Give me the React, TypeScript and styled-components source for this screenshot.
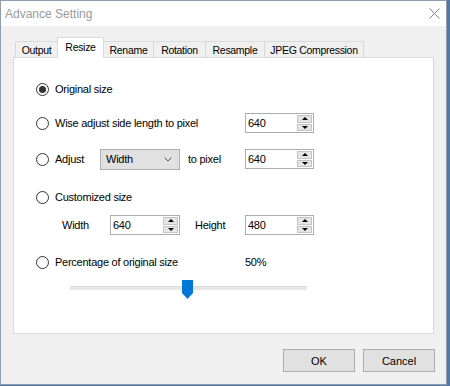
import React from 'react';
import styled, { createGlobalStyle, css } from 'styled-components';

const GlobalStyle = createGlobalStyle`
    html, body {
        margin:0;
        padding:0;
        background:#5577a8;
    }
    body{
        font-family:"Liberation Sans", Arial, sans-serif;
        font-size:11px;
    }
`;

const Window = styled.div`
    box-sizing:border-box;
    width:447px;
    height:385px;
    border:1px solid #8f9cad;
    background:#f0f0f0;
    display:flex;
    flex-direction:column;
`;

const TitleBar = styled.div`
    height:25px;
    background:#fff;
    display:flex;
    align-items:center;
    justify-content:space-between;
    padding-left:4px;
    padding-right:6px;
    & >span{
        font-size:12px;
        color:#999;
    }
`;

const Body = styled.div`
    flex:1;
    padding:11px 12px 12px 12px;
    display:flex;
    flex-direction:column;
`;

const TabStrip = styled.div`
    display:flex;
    align-items:flex-end;
    height:20px;
    padding-left:2px;
    position:relative;
    z-index:1;
`;

const Tab = styled.div<{ $w: number; $active?: boolean }>`
    box-sizing:border-box;
    width:${p => p.$w + 1}px;
    margin-right:-1px;
    height:16px;
    border:1px solid #d9d9d9;
    border-bottom:none;
    background:#f0f0f0;
    display:flex;
    align-items:center;
    justify-content:center;
    font-size:10.5px;
    letter-spacing:-0.3px;
    color:#000;
    ${p => p.$active && css`
        height:21px;
        margin-bottom:-1px;
        background:#fff;
        position:relative;
        z-index:2;
        padding-bottom:2px;
    `}
`;

const Panel = styled.div`
    box-sizing:border-box;
    height:277px;
    background:#fff;
    border:1px solid #d9d9d9;
    padding:20px 0 0 22px;
    display:flex;
    flex-direction:column;
`;

const Row = styled.div<{ $top?: number }>`
    height:22px;
    margin-top:${p => p.$top ?? 0}px;
    display:grid;
    grid-template-columns:209px 69px;
    align-items:center;
`;

const SizeRow = styled.div<{ $top?: number }>`
    height:22px;
    margin-top:${p => p.$top ?? 0}px;
    padding-left:26px;
    display:grid;
    grid-template-columns:48px 85px 50px 69px;
    align-items:center;
`;

const Inline = styled.div`
    display:flex;
    align-items:center;
`;

const Choice = styled.label<{ $w?: number }>`
    display:flex;
    align-items:center;
    width:${p => (p.$w ? `${p.$w}px` : 'auto')};
    letter-spacing:-0.25px;
    white-space:nowrap;
`;

const RadioCircle = styled.span<{ $checked?: boolean }>`
    box-sizing:border-box;
    width:13px;
    height:13px;
    border:1px solid #333;
    border-radius:50%;
    background:#fff;
    margin-right:6px;
    display:flex;
    align-items:center;
    justify-content:center;
    flex-shrink:0;
    &::after{
        content:'';
        width:7px;
        height:7px;
        border-radius:50%;
        background:${p => (p.$checked ? '#333' : 'transparent')};
    }
`;

const Text = styled.span<{ $ml?: number }>`
    margin-left:${p => p.$ml ?? 0}px;
    letter-spacing:-0.25px;
    white-space:nowrap;
`;

const SpinBox = styled.div<{ $w: number }>`
    box-sizing:border-box;
    width:${p => p.$w}px;
    height:20px;
    border:1px solid #acacac;
    background:#fff;
    display:flex;
    & >span{
        flex:1;
        padding-left:2px;
        line-height:18px;
        letter-spacing:-0.25px;
    }
`;

const SpinButtons = styled.div`
    width:15px;
    display:flex;
    flex-direction:column;
    padding:1px 1px 1px 0;
    gap:1px;
`;

const SpinButton = styled.div<{ $down?: boolean }>`
    flex:1;
    background:#e5e5e5;
    border:1px solid #c4c4c4;
    display:flex;
    align-items:center;
    justify-content:center;
    &::after{
        content:'';
        width:0;
        height:0;
        border-left:3px solid transparent;
        border-right:3px solid transparent;
        ${p => (p.$down ? 'border-top:3px solid #000;' : 'border-bottom:3px solid #000;')}
    }
`;

const Dropdown = styled.div`
    box-sizing:border-box;
    width:80px;
    height:21px;
    background:#e1e1e1;
    border:1px solid #adadad;
    display:flex;
    align-items:center;
    justify-content:space-between;
    padding:0 7px 0 5px;
    letter-spacing:-0.25px;
`;

const SliderBox = styled.div`
    position:relative;
    width:237px;
    height:20px;
    margin-top:7px;
    margin-left:34px;
`;

const Track = styled.div`
    margin-top:6px;
    height:3px;
    background:#e7e7e7;
    border-top:1px solid #dcdcdc;
`;

const Thumb = styled.svg`
    position:absolute;
    top:0;
`;

const ButtonRow = styled.div`
    display:flex;
    justify-content:flex-end;
    gap:8px;
    margin-top:15px;
    margin-right:-1px;
`;

const DialogButton = styled.button`
    box-sizing:border-box;
    width:72px;
    height:23px;
    background:#e1e1e1;
    border:1px solid #adadad;
    font-family:"Liberation Sans", Arial, sans-serif;
    font-size:11px;
    color:#000;
    padding:0;
`;

const Spin = ({ value, w = 69 }: { value: string; w?: number }) => (
    <SpinBox $w={w}>
        <span>{value}</span>
        <SpinButtons>
            <SpinButton />
            <SpinButton $down />
        </SpinButtons>
    </SpinBox>
);

const Radio = ({ label, checked, w }: { label: string; checked?: boolean; w?: number }) => (
    <Choice $w={w}>
        <RadioCircle $checked={checked} />
        {label}
    </Choice>
);

const tabs = [
    { name: 'Output', w: 42 },
    { name: 'Resize', w: 46 },
    { name: 'Rename', w: 50 },
    { name: 'Rotation', w: 52 },
    { name: 'Resample', w: 59 },
    { name: 'JPEG Compression', w: 99 },
];

const percent = 50;

const App = () => {
    return (
        <>
            <GlobalStyle />
            <Window>
                <TitleBar>
                    <span>Advance Setting</span>
                    <svg width="11" height="11" viewBox="0 0 11 11">
                        <path d="M0.5 0.5 L10.5 10.5 M10.5 0.5 L0.5 10.5" stroke="#8a8a8a" strokeWidth="1" />
                    </svg>
                </TitleBar>
                <Body>
                    <TabStrip>
                        {tabs.map(t => (
                            <Tab key={t.name} $w={t.w} $active={t.name === 'Resize'}>{t.name}</Tab>
                        ))}
                    </TabStrip>
                    <Panel>
                        <Row>
                            <Radio label="Original size" checked />
                        </Row>
                        <Row $top={12}>
                            <Radio label="Wise adjust side length to pixel" />
                            <Spin value="640" />
                        </Row>
                        <Row $top={14}>
                            <Inline>
                                <Radio label="Adjust" w={64} />
                                <Dropdown>
                                    Width
                                    <svg width="8" height="5" viewBox="0 0 8 5">
                                        <path d="M0.5 0.5 L4 4 L7.5 0.5" stroke="#555" fill="none" strokeWidth="1" />
                                    </svg>
                                </Dropdown>
                                <Text $ml={8}>to pixel</Text>
                            </Inline>
                            <Spin value="640" />
                        </Row>
                        <Row $top={16}>
                            <Radio label="Customized size" />
                        </Row>
                        <SizeRow $top={6}>
                            <Text>Width</Text>
                            <Spin value="640" w={70} />
                            <Text>Height</Text>
                            <Spin value="480" />
                        </SizeRow>
                        <Row $top={15}>
                            <Radio label="Percentage of original size" />
                            <Text>{percent}%</Text>
                        </Row>
                        <SliderBox>
                            <Track />
                            <Thumb width="11" height="19" viewBox="0 0 11 19" style={{ left: `calc(${percent}% - 7px)` }}>
                                <path d="M0 0 H11 V13 L5.5 19 L0 13 Z" fill="#0078d7" />
                            </Thumb>
                        </SliderBox>
                    </Panel>
                    <ButtonRow>
                        <DialogButton>OK</DialogButton>
                        <DialogButton>Cancel</DialogButton>
                    </ButtonRow>
                </Body>
            </Window>
        </>
    );
};

export default App;
